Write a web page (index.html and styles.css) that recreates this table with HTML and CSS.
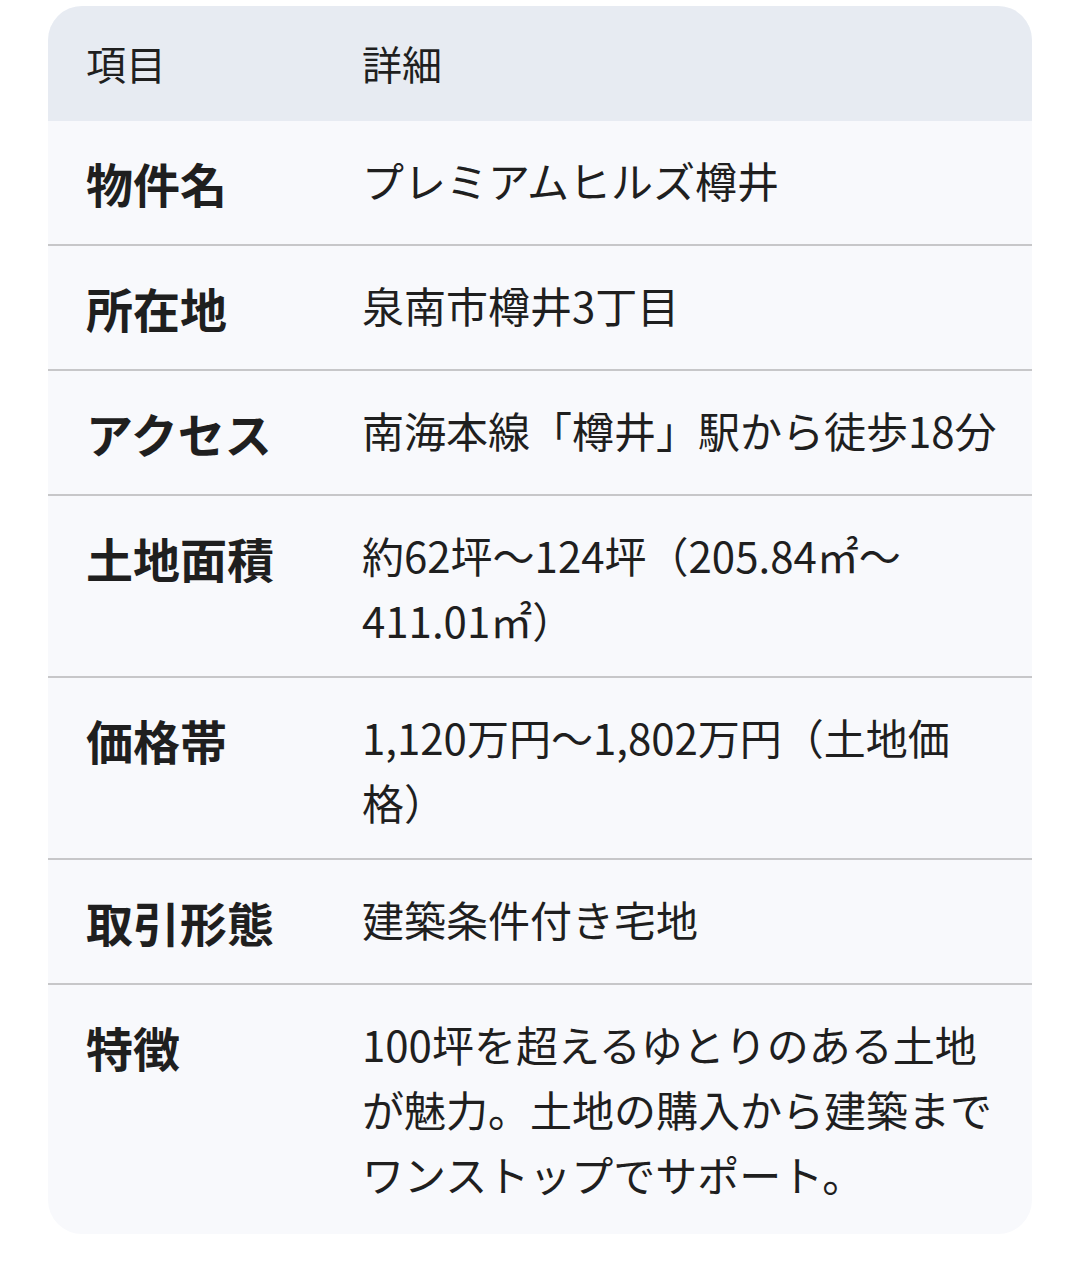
FILE: index.html
```html
<!DOCTYPE html>
<html lang="ja">
<head>
<meta charset="utf-8">
<link rel="stylesheet" href="styles.css">
</head>
<body>
<div class="card">
  <table class="info">
    <thead>
      <tr><th class="col-label">項目</th><th>詳細</th></tr>
    </thead>
    <tbody>
      <tr><td class="label">物件名</td><td class="value">プレミアムヒルズ樽井</td></tr>
      <tr><td class="label">所在地</td><td class="value">泉南市樽井3丁目</td></tr>
      <tr><td class="label">アクセス</td><td class="value">南海本線「樽井」駅から徒歩18分</td></tr>
      <tr><td class="label">土地面積</td><td class="value">約62坪〜124坪（205.84㎡〜411.01㎡）</td></tr>
      <tr><td class="label">価格帯</td><td class="value">1,120万円〜1,802万円（土地価格）</td></tr>
      <tr><td class="label">取引形態</td><td class="value">建築条件付き宅地</td></tr>
      <tr><td class="label">特徴</td><td class="value">100坪を超えるゆとりのある土地が魅力。土地の購入から建築までワンストップでサポート。</td></tr>
    </tbody>
  </table>
</div>
</body>
</html>
```
FILE: styles.css
```css
html, body {
  margin: 0;
  padding: 0;
  background: #ffffff;
}
body {
  font-family: "Noto Sans CJK JP", "Noto Sans", sans-serif;
  color: #1f1f1f;
}
.card {
  margin: 6px 0 0 48px;
  width: 984px;
  border-radius: 34px;
  overflow: hidden;
  background: #f8f9fc;
}
.info {
  width: 100%;
  border-collapse: collapse;
  table-layout: fixed;
}
.info th {
  background: #e7ebf2;
  text-align: left;
  font-weight: 400;
  font-size: 40px;
  line-height: 61px;
  padding: 27px 32px 27px 0;
  color: #1f1f1f;
}
.info th.col-label {
  width: 276px;
  padding-left: 38px;
  padding-right: 0;
}
.info td {
  vertical-align: top;
  padding: 24px 32px 24px 0;
}
.info tbody tr + tr td {
  border-top: 2px solid #c7c7c9;
}
.info td.label {
  padding-left: 38px;
  padding-right: 0;
  font-weight: 700;
  font-size: 47px;
  line-height: 75px;
}
.info td.value {
  font-size: 42px;
  line-height: 65px;
  padding-top: 26px;
}
.info tbody tr:last-child td.value {
  padding-bottom: 28px;
}
```
